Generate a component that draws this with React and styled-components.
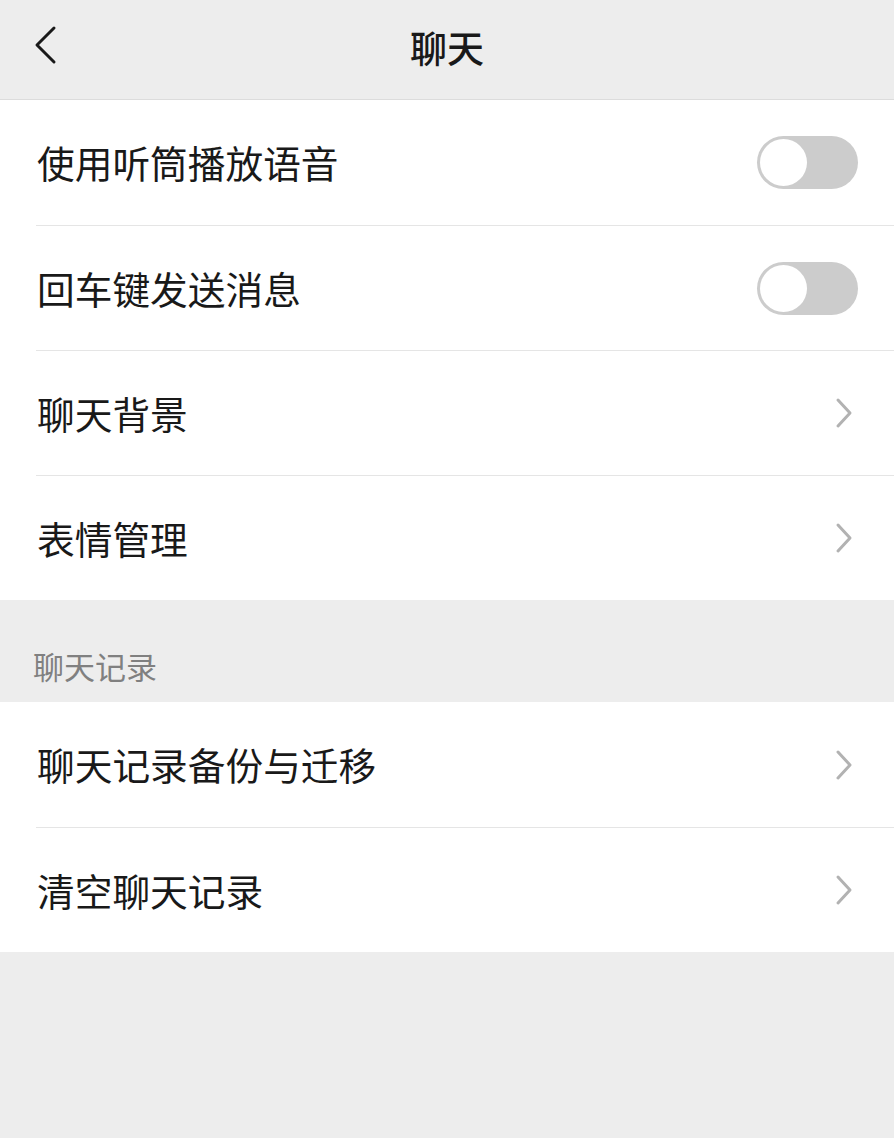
import React, { useState } from "react";
import styled, { createGlobalStyle } from "styled-components";

const GlobalStyle = createGlobalStyle`
  html, body {
    margin: 0;
    padding: 0;
    background: #ededed;
  }
  body {
    font-family: "Noto Sans CJK SC", "Noto Sans", sans-serif;
  }
`;

const Page = styled.div`
  width: 894px;
  min-height: 1138px;
  background: #ededed;
`;

const Header = styled.div`
  height: 99px;
  border-bottom: 1px solid #dcdcdc;
  display: flex;
  align-items: center;
  justify-content: center;
  position: relative;
`;

const Back = styled.div`
  position: absolute;
  left: 30px;
  top: 25px;
  width: 30px;
  height: 40px;
`;

const Title = styled.div`
  font-size: 37px;
  font-weight: 500;
  color: #191919;
  margin-top: -6px;
`;

const Group = styled.div`
  background: #fff;
`;

const Row = styled.div`
  height: 125px;
  margin-left: 36px;
  padding-right: 36px;
  display: flex;
  align-items: center;
  justify-content: space-between;
  box-sizing: border-box;
  border-top: ${(p) => (p.first ? "none" : "1px solid #e5e5e5")};
`;

const Label = styled.div`
  font-size: 37.7px;
  color: #191919;
  margin-top: -2px;
  margin-left: 1px;
`;

const SectionTitle = styled.div`
  height: 102px;
  padding-left: 33px;
  box-sizing: border-box;
  display: flex;
  align-items: flex-end;
  padding-bottom: 14px;
  font-size: 31px;
  color: #808080;
`;

const Track = styled.div`
  width: 101px;
  height: 53px;
  border-radius: 27px;
  background: ${(p) => (p.on ? "#07c160" : "#cccccc")};
  position: relative;
  cursor: pointer;
`;

const Knob = styled.div`
  position: absolute;
  top: 3px;
  left: ${(p) => (p.on ? "51px" : "3px")};
  width: 47px;
  height: 47px;
  border-radius: 50%;
  background: #fff;
  transition: left 0.2s;
`;

const Chevron = () => (
  <svg width="20" height="32" viewBox="0 0 20 32" style={{ marginRight: 4 }}>
    <path d="M4 3 L16 16 L4 29" fill="none" stroke="#b2b2b2" strokeWidth="3" strokeLinecap="round" strokeLinejoin="round" />
  </svg>
);

const Toggle = () => {
  const [on, setOn] = useState(false);
  return (
    <Track on={on ? 1 : 0} onClick={() => setOn(!on)}>
      <Knob on={on ? 1 : 0} />
    </Track>
  );
};

const App = () => {
  return (
    <Page>
      <GlobalStyle />
      <Header>
        <Back>
          <svg width="30" height="40" viewBox="0 0 30 40">
            <path d="M24 3 L7 20 L24 37" fill="none" stroke="#191919" strokeWidth="3" strokeLinecap="round" strokeLinejoin="round" />
          </svg>
        </Back>
        <Title>聊天</Title>
      </Header>
      <Group>
        <Row first>
          <Label>使用听筒播放语音</Label>
          <Toggle />
        </Row>
        <Row>
          <Label>回车键发送消息</Label>
          <Toggle />
        </Row>
        <Row>
          <Label>聊天背景</Label>
          <Chevron />
        </Row>
        <Row>
          <Label>表情管理</Label>
          <Chevron />
        </Row>
      </Group>
      <SectionTitle>聊天记录</SectionTitle>
      <Group>
        <Row first>
          <Label>聊天记录备份与迁移</Label>
          <Chevron />
        </Row>
        <Row>
          <Label>清空聊天记录</Label>
          <Chevron />
        </Row>
      </Group>
    </Page>
  );
};

export default App;
